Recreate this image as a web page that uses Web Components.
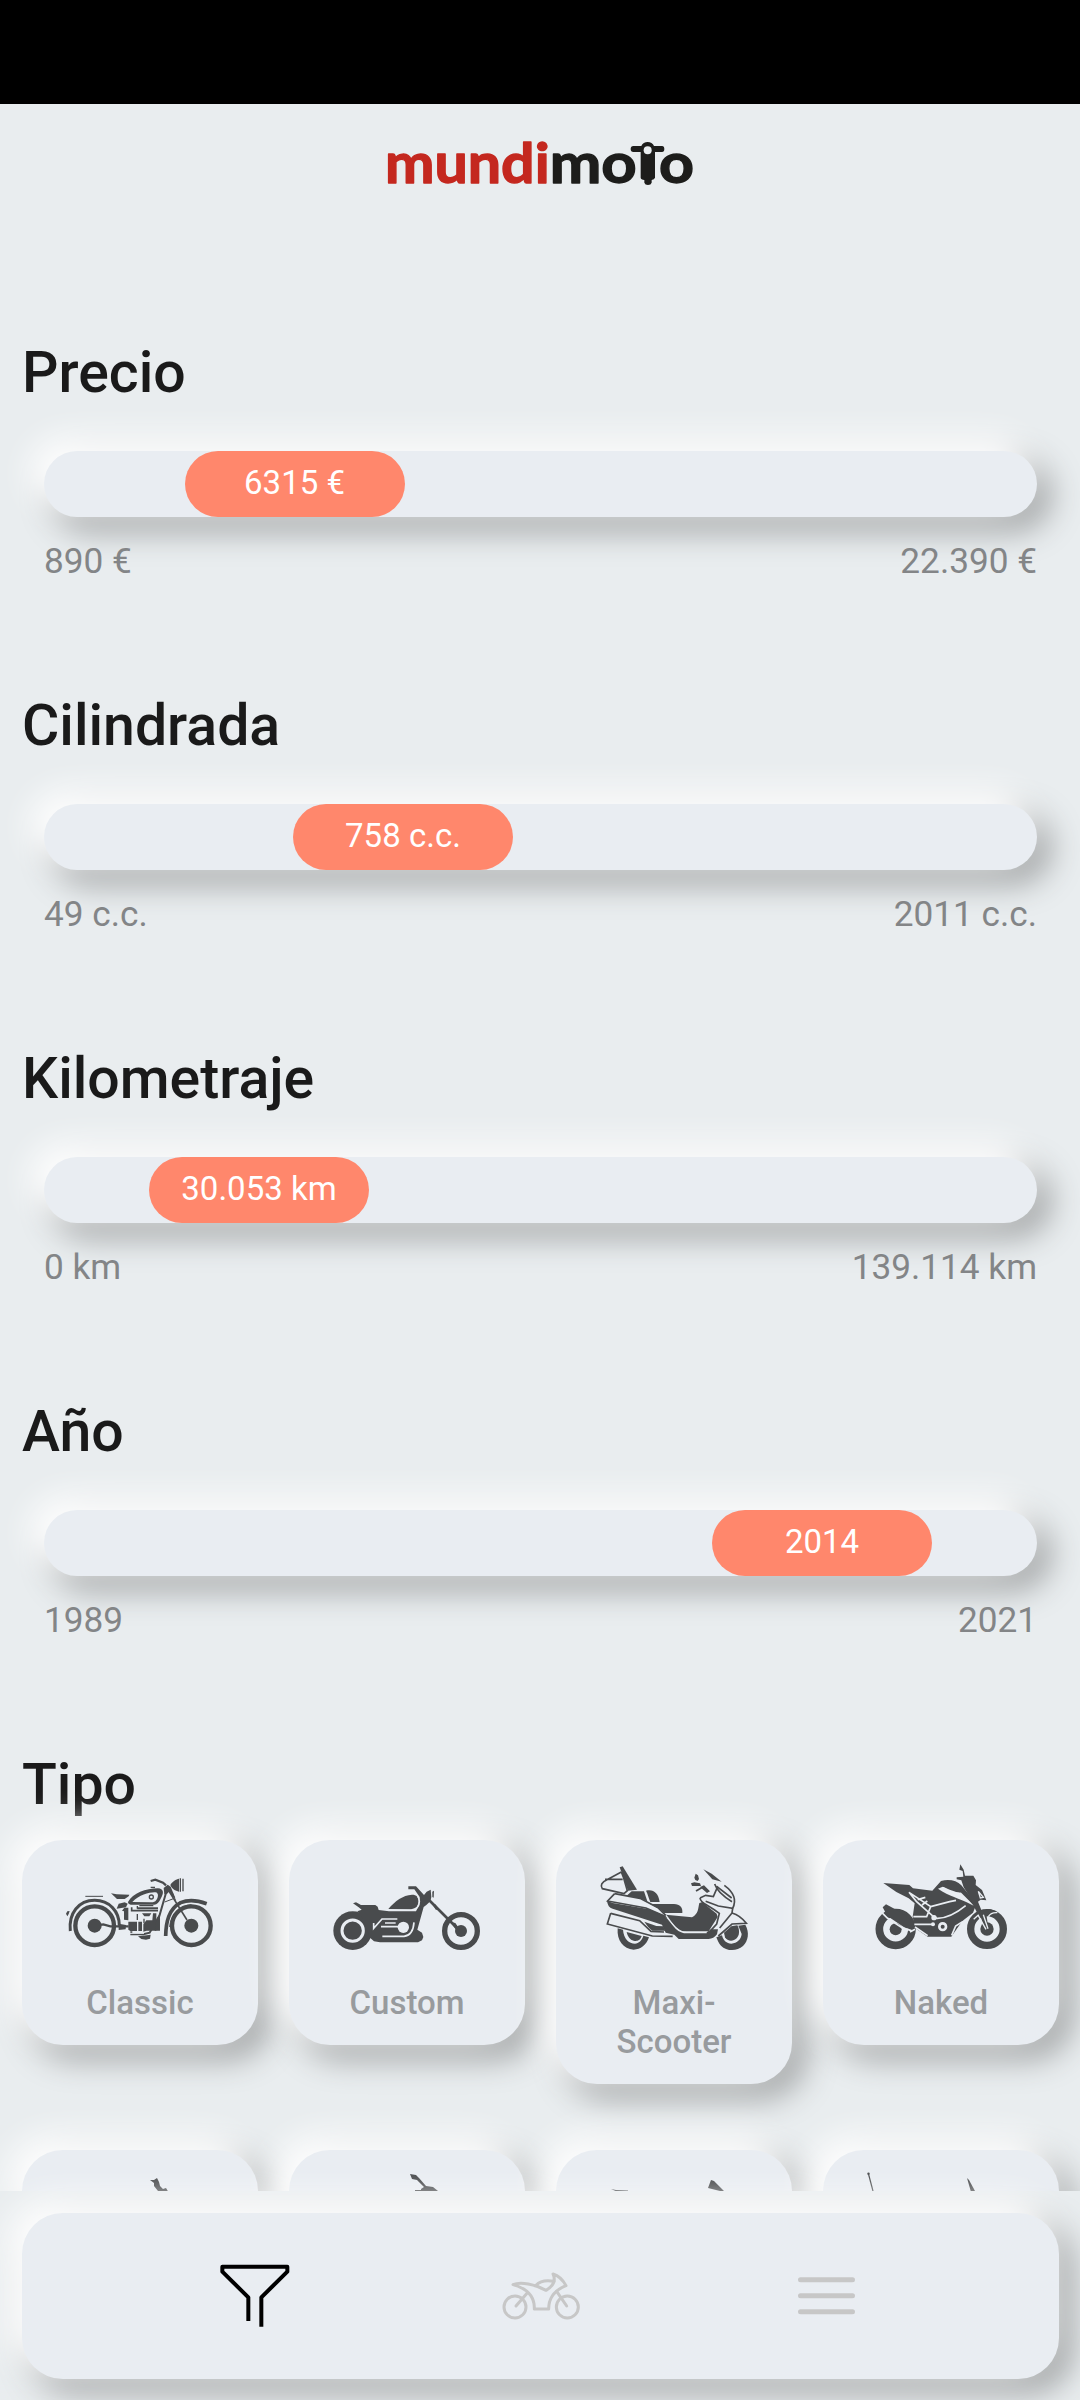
<!DOCTYPE html>
<html lang="es">
<head>
<meta charset="utf-8">
<meta name="viewport" content="width=device-width, initial-scale=1">
<title>mundimoto</title>
<style>
  html, body {
    margin: 0;
    padding: 0;
  }
  body {
    --bg: #e9edef;
    --surface: #e9edf2;
    --accent: #ff876c;
    --raised: -11px -11px 32px 3px #fff, 11px 11px 32px 3px #9fa2a3;
    height: 2400px;
    overflow: hidden;
    background: var(--bg);
    color: #1a1a1a;
    font-family: Roboto, "Liberation Sans", sans-serif;
  }
</style>
</head>
<body>
<moto-app>
  <moto-logo slot="header"></moto-logo>

  <moto-range heading="Precio" min="890 €" max="22.390 €" position="0.2523">6315 €</moto-range>
  <moto-range heading="Cilindrada" min="49 c.c." max="2011 c.c." position="0.3615">758 c.c.</moto-range>
  <moto-range heading="Kilometraje" min="0 km" max="139.114 km" position="0.2165">30.053 km</moto-range>
  <moto-range heading="Año" min="1989" max="2021" position="0.7835">2014</moto-range>

  <moto-types heading="Tipo">
    <moto-type icon="classic">Classic</moto-type>
    <moto-type icon="custom">Custom</moto-type>
    <moto-type icon="maxi">Maxi-Scooter</moto-type>
    <moto-type icon="naked">Naked</moto-type>
    <moto-type icon="trail"></moto-type>
    <moto-type icon="scooter"></moto-type>
    <moto-type icon="sport"></moto-type>
    <moto-type icon="touring"></moto-type>
  </moto-types>

  <moto-nav slot="footer">
    <moto-nav-item icon="filter" active></moto-nav-item>
    <moto-nav-item icon="bike"></moto-nav-item>
    <moto-nav-item icon="menu"></moto-nav-item>
  </moto-nav>
</moto-app>

<script>
// Motorbike pictures, one per type. "i" is the class for light lines cut into the dark body.
const TYPE_ICONS = {
  classic: `
    <svg viewBox="66 366 708 363">
      <g class="l">
        <circle cx="284" cy="557" r="58" stroke-width="13"/>
        <circle cx="574" cy="557" r="58" stroke-width="13"/>
        <path d="M211 573C205 520 236 481 284 481C328 481 358 514 358 557" stroke-width="9"/>
        <path d="M497 588C498 545 506 507 542 488C567 477 593 481 620 491" stroke-width="11"/>
        <path d="M509 561C511 525 540 496 574 494" stroke-width="3"/>
        <path d="M256 469H309" stroke-width="3"/>
        <path d="M502 445L478 528L449 578L430 583H394V574" stroke-width="6"/>
        <path d="M506 452L561 540" stroke-width="5"/>
        <path d="M494 486L523 475M518 460L527 482" stroke-width="3"/>
        <path d="M452 423L466 419L489 428L498 436" stroke-width="7"/>
        <path d="M395 502V512H474" stroke-width="5"/>
        <path d="M412 498V506M412 522V540M432 536V550M452 442H465" stroke-width="4"/>
        <path d="M284 557L310 553L331 559H386" stroke-width="7"/>
      </g>
      <circle cx="284" cy="557" r="21"/>
      <circle cx="574" cy="557" r="21"/>
      <path d="M198 521L202 514L209 513L206 522L202 529Z"/>
      <path d="M333 460L350 463L388 464L386 469L374 477H351Z"/>
      <path fill-rule="evenodd" d="M384 486C399 459 437 446 474 445C491 446 493 459 482 476C477 487 471 493 463 494H392C387 493 384 490 384 486ZM397 486C418 464 450 456 466 457C478 458 475 476 466 484C462 487 456 487 450 487Z"/>
      <circle cx="454" cy="471" r="6" fill="none" stroke="#494b4d" stroke-width="4"/>
      <path d="M491 444L503 434L512 440L526 474L516 469L508 454L501 462L493 463Z"/>
      <path d="M511 435C516 424 529 418 537 416V455C526 453 515 446 511 435Z"/>
      <path d="M539 415H543V455H539ZM547 416H551V454H547Z"/>
      <path d="M356 491L374 487L383 491L378 502L350 506Z"/>
      <path d="M373 503H385V541L372 539V514L366 512ZM356 551L378 555L377 568L356 570Z"/>
      <path d="M385 545H411V573H391L385 569ZM415 545H426V573H415ZM430 553L439 541L457 541L459 520H469V572H440L430 575Z"/>
      <path d="M418 495H460V499H418ZM412 502H474V508H412ZM426 520H454L448 529H433ZM470 535L480 520V572H464Z"/>
      <path d="M414 589L440 586L452 584L450 596L438 599L424 597Z"/>
      <path class="i" d="M386 580H432" stroke-width="3"/>
    </svg>`,
  custom: `
    <svg viewBox="57 186 708 363">
      <circle cx="248" cy="392" r="58"/>
      <path d="M249 310L258 307L273 315H316L323 320L326 330L357 334H438L446 318L449 291L433 268H415V259H438L462 285L470 275L482 269L484 291L481 304L469 315L461 321L442 389L456 398L460 411L456 421L444 427H330L312 424L300 413L276 350L262 334L275 329L266 322Z"/>
      <path d="M355 327C376 302 398 286 426 284C440 284 446 292 446 304C446 318 440 327 424 329Z"/>
      <circle class="i" cx="248" cy="392" r="32" stroke-width="9"/>
      <path class="i" d="M355 330H424C440 328 448 318 448 304C448 298 446 293 443 289" stroke-width="5"/>
      <path class="i" d="M311 369V385L336 357H382M345 369H377M333 380H389M337 409H402C420 407 430 394 432 367" stroke-width="5"/>
      <circle cx="400" cy="382" r="17" fill="#e9edf2"/>
      <path d="M487 275L492 272L491 293L487 291Z"/>
      <path class="l" d="M477 300L558 381" stroke-width="8"/>
      <path d="M488 315L496 313L506 326L498 330ZM541 366L556 369L569 388L560 392Z"/>
      <circle class="l" cx="573" cy="393" r="49" stroke-width="16"/>
      <circle cx="573" cy="393" r="18"/>
    </svg>`,
  maxi: `
    <svg viewBox="48 186 708 363">
      <path d="M239 202L248 199L291 269L264 272Z"/>
      <path d="M233 385L249 389C251 416 267 431 285 431C296 430 306 421 310 407L327 412C319 435 302 449 281 449C250 447 230 422 233 385Z"/>
      <path d="M260 396L305 408C300 423 290 424 281 422C270 420 263 410 260 396Z"/>
      <path d="M595 377L616 374C629 398 625 422 609 438C590 455 560 454 543 437C536 430 532 420 529 412L546 406C550 422 560 431 574 431C592 430 604 417 605 402Z"/>
      <path d="M552 398L574 379L592 376C600 390 598 407 590 415C579 426 562 424 555 412Z"/>
      <path d="M201 302L218 309L324 327L371 346C398 371 410 391 428 397H500L513 388H534L531 403C524 412 516 417 506 417H416L403 404L377 398L366 374L218 326C208 323 203 316 201 302Z"/>
      <path d="M377 344L456 352C476 341 474 326 478 309L489 306L501 318L530 341L533 351L506 394H428C404 384 395 363 377 350Z"/>
      <path d="M260 287L275 274H312L322 304C301 294 280 290 260 287ZM318 272C340 267 355 278 359 306H331C326 295 324 283 318 272ZM331 312H402C420 313 429 322 427 339H372C363 328 348 321 331 312Z"/>
      <path d="M490 208L515 221L545 245L517 238Z"/>
      <path d="M463 233L467 221L474 226L477 237L473 243L466 240ZM453 250L463 247L480 250L483 258H456ZM480 261L492 256L510 274L501 279Z"/>
      <path d="M313 365L349 378L370 379L376 392H337C328 386 321 376 313 365Z"/>
      <g class="l" stroke-width="5">
        <path d="M244 216L201 239C185 246 180 257 187 266L252 281L262 272L251 234L244 216M195 238H248" />
        <path d="M224 281L203 303L318 324L382 352"/>
        <path d="M224 281L300 295L354 323L380 349"/>
        <path d="M212 340L202 372L337 408L398 409M212 340L299 362L333 394L372 396"/>
        <path d="M480 294L497 286L520 290L533 260M480 294C482 310 499 311 538 340L530 372L512 392"/>
        <path d="M497 304L535 318L578 325C590 301 582 277 553 256M524 252C532 276 556 293 576 305M530 259L575 294"/>
        <path d="M578 325L576 339C597 345 609 357 619 370L576 372L535 408M576 339L539 384"/>
        <path d="M468 273L485 263"/>
      </g>
      <path class="i" d="M378 346C400 377 413 398 441 398H500" stroke-width="4"/>
    </svg>`,
  naked: `
    <svg viewBox="69 186 708 363">
      <circle class="l" cx="287" cy="387" r="49" stroke-width="23"/>
      <circle cx="287" cy="388" r="18"/>
      <circle class="l" cx="561" cy="387" r="49" stroke-width="22"/>
      <circle cx="561" cy="387" r="20"/>
      <path d="M250 249L328 255L339 265L397 272L423 243C446 236 470 241 484 256L503 279L527 318L519 338L490 361L479 374L454 410H383L345 384L338 350L344 310L326 295L289 276Z"/>
      <path d="M248 322L258 313L301 336L342 368V384L319 386L262 348Z"/>
      <path class="i" d="M345 388L330 396M242 334L262 354L306 383L334 392" stroke-width="5"/>
      <path class="i" d="M327 277L392 320L380 350H340M327 277L349 304L397 347L410 355C443 356 475 335 497 317M353 299L376 292M366 315L382 303M392 320L449 305L468 301" stroke-width="5"/>
      <path class="i" d="M343 373H399M345 381L383 407M455 406L467 378L489 364" stroke-width="5"/>
      <circle cx="402" cy="353" r="8" fill="#e9edf2"/>
      <circle cx="399" cy="373" r="6" fill="#e9edf2"/>
      <circle cx="428" cy="380" r="10" fill="#494b4d" stroke="#e9edf2" stroke-width="8"/>
      <path d="M414 266L428 260C449 264 461 273 482 277L524 319L500 307C479 294 449 291 414 266Z" fill="#e9edf2"/>
      <path d="M415 263L427 258C449 270 464 276 482 278L479 264L468 257L445 249L425 251Z"/>
      <path class="l" d="M483 263L527 320" stroke-width="6"/>
      <path d="M481 193L491 209L495 227H520L528 241L527 255L546 270L559 301L542 299L534 305L548 340L536 348L502 279L491 262L484 241L470 238V232L490 230L488 213L478 209Z"/>
      <path class="i" d="M535 274L550 292L541 294Z" stroke-width="4"/>
      <path d="M523 353L539 334L567 327L591 334L572 340L560 349L565 385L554 388L542 351Z"/>
      <path class="i" d="M535 347L558 388M550 344L564 386M521 358L536 344M565 350C572 338 580 337 592 338" stroke-width="4"/>
    </svg>`,
  trail: `
    <svg viewBox="0 0 236 121">
      <path d="M128 8L132 8L135 6L137 10L138 14L141 17L144 16L147 21L158 40H140L136 19L132 14L132 11Z"/>
    </svg>`,
  scooter: `
    <svg viewBox="0 0 236 121">
      <path d="M121 2L127 3L130 6L137 14L144 15L149 19L155 40H132V17L135 15L128 8L123 7Z"/>
      <path class="l" d="M126 18.500H136" stroke-width="1"/>
    </svg>`,
  sport: `
    <svg viewBox="0 0 236 121">
      <path d="M152 16L155 8L158 9L170 21L180 40L164 19Z"/>
      <path d="M55 17L60 18L72 18.500V21H64Z"/>
    </svg>`,
  touring: `
    <svg viewBox="0 0 236 121">
      <circle cx="45.500" cy="1.800" r="1.200"/>
      <path class="l" d="M45.500 2L50.500 21" stroke-width="1.200"/>
      <path d="M144 6L146 8L152 19L154 24L148 20Z"/>
    </svg>`
};

const NAV_ICONS = {
  filter: `
    <svg width="70" height="64" viewBox="59 74 210 192">
      <path d="M144 245V174L66 97V82H261V97L183 174V262" fill="none" stroke="currentColor" stroke-width="12" stroke-linejoin="round"/>
    </svg>`,
  bike: `
    <svg width="78" height="48" viewBox="904 95 234 144">
      <g fill="none" stroke="currentColor" stroke-width="9" stroke-linejoin="round" stroke-linecap="round">
        <circle cx="943" cy="200" r="33"/>
        <circle cx="1100" cy="200" r="33"/>
        <path d="M946 197L979 159M1098 197L1068 153"/>
        <path d="M937 133C960 123 1003 132 1036 150C1053 140 1068 125 1057 101C1073 106 1087 119 1096 136C1071 146 1044 164 1044 206H1001C1002 178 992 148 937 133Z"/>
        <path d="M1006 135C1018 122 1038 119 1060 123"/>
      </g>
    </svg>`,
  menu: `
    <svg width="57" height="38" viewBox="0 0 57 38">
      <path d="M2.500 2.700H54.500M2.500 18.700H54.500M2.500 34.700H54.500" stroke="currentColor" stroke-width="5" stroke-linecap="round"/>
    </svg>`
};

class MotoElement extends HTMLElement {
  constructor() {
    super();
    this.attachShadow({ mode: "open" });
  }

  connectedCallback() {
    const template = document.createElement("template");
    template.innerHTML = this.template();
    this.shadowRoot.replaceChildren(template.content.cloneNode(true));
  }

  attr(name) {
    return this.getAttribute(name) || "";
  }
}

class MotoApp extends MotoElement {
  template() {
    return `
    <style>
      :host {
        display: flex;
        flex-direction: column;
        height: 2400px;
      }
      .status {
        flex: none;
        height: 104px;
        background: #000;
      }
      header {
        flex: none;
        display: flex;
        justify-content: center;
        padding-top: 16px;
        height: 106px;
      }
      main {
        flex: 1;
        min-height: 0;
        overflow: hidden;
        display: flex;
        flex-direction: column;
        gap: 111.500px;
        padding-top: 112px;
      }
    </style>
    <div class="status"></div>
    <header><slot name="header"></slot></header>
    <main><slot></slot></main>
    <slot name="footer"></slot>
`;
  }
}

class MotoLogo extends MotoElement {
  template() {
    return `
    <style>
      :host { display: block; }
      svg {
        display: block;
        overflow: visible;
      }
      text {
        font-family: Lato, "Open Sans", sans-serif;
        font-weight: 700;
        font-size: 167px;
        stroke-width: 4;
        stroke-linejoin: round;
      }
      .mundi { fill: #c4281f; stroke: #c4281f; }
      .moto { fill: #1d1d1b; stroke: #1d1d1b; }
    </style>
    <svg width="306" height="77" viewBox="82 90 918 231">
      <text class="mundi" x="76" y="280" textLength="494" lengthAdjust="spacingAndGlyphs">mundi</text>
      <text class="moto" x="570" y="280" textLength="261" lengthAdjust="spacingAndGlyphs">mo</text>
      <path fill="#1d1d1b" d="M821 168H845C851 152 877 152 883 168H907Q914 168 914 177T907 186H886V263Q884 269 876 270V278Q874 285 865 285T854 278V270Q844 269 843 263V186H821Q813 186 813 177T821 168Z"/>
      <circle cx="864" cy="181" r="12" fill="#e9edef"/>
      <text class="moto" x="898" y="280" textLength="105" lengthAdjust="spacingAndGlyphs">o</text>
    </svg>
`;
  }
}

class MotoHeading extends MotoElement {
  template() {
    return `
    <style>
      :host { display: block; }
      h2 {
        margin: 0;
        padding: 0 22px;
        font-size: 57.200px;
        font-weight: 500;
        line-height: 70px;
      }
    </style>
    <h2><slot></slot></h2>
`;
  }
}

class MotoRange extends MotoElement {
  template() {
    return `
    <style>
      :host { display: block; }
      .track {
        display: flex;
        height: 66px;
        margin: 42.500px 43px 24px 44px;
        border-radius: 33px;
        background: var(--surface);
        box-shadow: var(--raised);
      }
      .thumb {
        width: 220px;
        margin-left: calc(${this.attr("position")} * 100% - 110px);
        border-radius: 33px;
        background: var(--accent);
        color: #fff;
        font-size: 33px;
        line-height: 64px;
        text-align: center;
      }
      .limits {
        display: flex;
        justify-content: space-between;
        padding: 0 43px 0 44px;
        color: #838587;
        font-size: 35.200px;
        line-height: 40px;
        height: 39px;
      }
    </style>
    <moto-heading>${this.attr("heading")}</moto-heading>
    <div class="track"><div class="thumb"><slot></slot></div></div>
    <div class="limits"><span>${this.attr("min")}</span><span>${this.attr("max")}</span></div>
`;
  }
}

class MotoTypes extends MotoElement {
  template() {
    return `
    <style>
      :host { display: block; }
      .grid {
        display: grid;
        grid-template-columns: repeat(4, 236px);
        justify-content: space-between;
        align-items: start;
        row-gap: 66px;
        padding: 20px 21px 0 22px;
      }
    </style>
    <moto-heading>${this.attr("heading")}</moto-heading>
    <div class="grid"><slot></slot></div>
`;
  }
}

class MotoType extends MotoElement {
  template() {
    return `
    <style>
      :host {
        display: block;
        box-sizing: border-box;
        padding: 22px 0 23px;
        border-radius: 41px;
        background: var(--surface);
        box-shadow: var(--raised);
        text-align: center;
      }
      svg {
        display: block;
        width: 236px;
        height: 121px;
        fill: #494b4d;
      }
      .l { fill: none; stroke: #494b4d; }
      .i { fill: none; stroke: #e9edf2; }
      p {
        margin: 0 auto;
        width: 150px;
        min-height: 39px;
        color: #989b9e;
        font-size: 33px;
        font-weight: 500;
        line-height: 39px;
      }
    </style>
    ${TYPE_ICONS[this.attr("icon")]}
    <p><slot></slot></p>
`;
  }
}

class MotoNav extends MotoElement {
  template() {
    return `
    <style>
      :host {
        display: block;
        flex: none;
        position: relative;
        height: 209px;
      }
      nav {
        display: flex;
        justify-content: center;
        align-items: center;
        height: 166px;
        margin: 22px 21px 0 22px;
        border-radius: 41px;
        background: var(--surface);
        box-shadow: var(--raised);
      }
    </style>
    <nav><slot></slot></nav>
`;
  }
}

class MotoNavItem extends MotoElement {
  template() {
    return `
    <style>
      :host {
        display: flex;
        justify-content: center;
        width: 286px;
        color: #c7c7c7;
      }
      :host([active]) { color: #000; }
      svg { display: block; }
    </style>
    ${NAV_ICONS[this.attr("icon")]}
`;
  }
}

customElements.define("moto-app", MotoApp);
customElements.define("moto-logo", MotoLogo);
customElements.define("moto-heading", MotoHeading);
customElements.define("moto-range", MotoRange);
customElements.define("moto-types", MotoTypes);
customElements.define("moto-type", MotoType);
customElements.define("moto-nav", MotoNav);
customElements.define("moto-nav-item", MotoNavItem);
</script>
</body>
</html>
